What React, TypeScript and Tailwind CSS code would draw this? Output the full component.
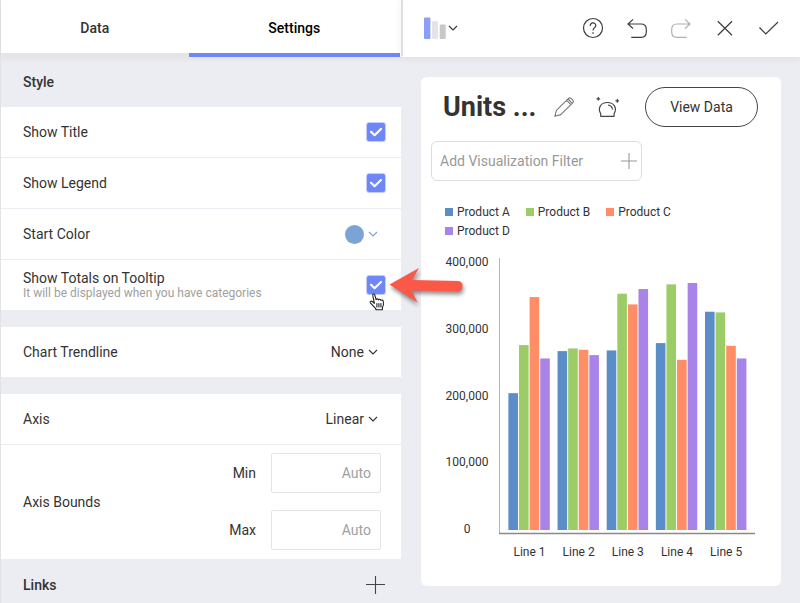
import type { ReactNode } from "react";

const PRODUCTS = [
  { name: "Product A", color: "#5b8ec9" },
  { name: "Product B", color: "#9bcc66" },
  { name: "Product C", color: "#ff8d66" },
  { name: "Product D", color: "#a984e8" },
];

// Units per line, in thousands, in the order of PRODUCTS.
const LINES = [
  { name: "Line 1", units: [205, 277, 349, 257] },
  { name: "Line 2", units: [268, 272, 270, 262] },
  { name: "Line 3", units: [269, 354, 338, 361] },
  { name: "Line 4", units: [280, 368, 255, 370] },
  { name: "Line 5", units: [327, 326, 276, 257] },
];

const TICKS = [400, 300, 200, 100, 0];

function Chevron({ className = "" }: { className?: string }) {
  return (
    <svg viewBox="0 0 10 10" className={`h-[10px] w-[10px] shrink-0 ${className}`} fill="none" stroke="currentColor" strokeWidth="1.1" aria-hidden="true">
      <path d="M1 3 L5 7 L9 3" />
    </svg>
  );
}

function Row({ children, last = false }: { children: ReactNode; last?: boolean }) {
  return (
    <div className={`relative flex items-center justify-between bg-white pl-[22px] pr-[15px] ${last ? "h-[50px]" : "h-[51px] border-b border-[#ecedf2]"}`}>
      {children}
    </div>
  );
}

function CheckRow({ id, label, note, last, children }: { id: string; label: string; note?: string; last?: boolean; children?: ReactNode }) {
  return (
    <Row last={last}>
      <label htmlFor={id} className="flex flex-col">
        <span className={note ? "leading-4" : "leading-5"}>{label}</span>
        {note && <span className="text-xs leading-[14px] text-[#a0a0a0]">{note}</span>}
      </label>
      <span className="grid h-5 w-5 shrink-0">
        <input id={id} type="checkbox" defaultChecked className="peer col-start-1 row-start-1 h-5 w-5 appearance-none rounded-[3px] border border-[#c3ccfc] bg-white checked:bg-[#6e87f8]" />
        <svg viewBox="0 0 20 20" className="pointer-events-none col-start-1 row-start-1 h-5 w-5 opacity-0 peer-checked:opacity-100" fill="none" stroke="#fff" strokeWidth="2.2" strokeLinecap="round" strokeLinejoin="round" aria-hidden="true">
          <path d="M5 9.800 L8.600 13.200 L15 7" />
        </svg>
      </span>
      {children}
    </Row>
  );
}

function SelectRow({ id, label, options, last }: { id: string; label: string; options: string[]; last?: boolean }) {
  return (
    <Row last={last}>
      <label htmlFor={id}>{label}</label>
      <span className="flex items-center gap-1 pr-2">
        <select id={id} className="w-24 appearance-none bg-transparent [text-align-last:right]">
          {options.map((o) => (
            <option key={o}>{o}</option>
          ))}
        </select>
        <Chevron />
      </span>
    </Row>
  );
}

function BoundField({ id, label }: { id: string; label: string }) {
  return (
    <div className="flex items-center justify-end gap-[15px]">
      <label htmlFor={id}>{label}</label>
      <input id={id} type="text" placeholder="Auto" className="h-10 w-[110px] rounded-xs border border-[#e4e4e6] bg-white px-[9px] text-right placeholder:text-[#a0a0a0]" />
    </div>
  );
}

function Pointer() {
  return (
    <>
      <svg viewBox="0 0 80 44" className="pointer-events-none absolute left-[387px] top-[3px] z-10 h-11 w-20 drop-shadow-[1px_3px_2px_rgba(0,0,0,0.45)]" aria-hidden="true">
        <path d="M1.500 21.500 L31 5 L24 17 L70 18 Q75 18.500 74.500 23.500 Q74 28.500 69.500 28.500 L23.500 27.500 L29.500 39.500 Z" fill="#fb5848" />
      </svg>
      <svg viewBox="0 0 16 18" className="pointer-events-none absolute left-[368px] top-[33px] z-10 h-[18px] w-4" fill="#fff" stroke="#222" strokeWidth="1.1" strokeLinejoin="round" strokeLinecap="round" aria-hidden="true">
        <path d="M5.400 10.300 L3.800 2.700 C3.400 .8 5.400 .4 5.900 2.200 L7.100 6.700 C7.500 5.500 9.300 5.600 9.500 6.900 C10.100 5.900 11.700 6.200 11.900 7.400 C12.700 6.700 14.200 7 14.300 8.400 C14.700 10.800 14.600 12.400 13.500 14.200 L13.300 16.700 H7 L6.500 15.300 C5 13.800 3.500 12.100 1.400 9.800 C.5 8.500 2 7.700 3.200 8.500 Z" />
        <path d="M7.900 10.500 V14 M9.900 10.500 V14 M11.900 10.500 V14" />
      </svg>
    </>
  );
}

function SettingsPanel() {
  return (
    <aside className="w-[401px] shrink-0 border-l border-[#e3e3e5]">
      <div role="tablist" className="grid h-[57px] grid-cols-[47%_53%] bg-white pr-px font-medium shadow-[0_2px_6px_rgba(0,0,0,0.05)]">
        <button role="tab" aria-selected="false" className="border-b-4 border-[#e5e5e7] bg-white pt-[2px]">
          Data
        </button>
        <button role="tab" aria-selected="true" className="border-b-4 border-[#6e87f8] bg-white pt-[2px] text-black">
          Settings
        </button>
      </div>

      <h2 className="flex h-[50px] items-center pl-[22px] font-medium">Style</h2>
      <section>
        <CheckRow id="show-title" label="Show Title" />
        <CheckRow id="show-legend" label="Show Legend" />
        <Row>
          <span id="start-color">Start Color</span>
          <button aria-labelledby="start-color" className="flex items-center gap-1 pr-2 text-[#7ba3d4]">
            <span className="h-[19px] w-[19px] rounded-full bg-[#7ba3d4]" />
            <Chevron />
          </button>
        </Row>
        <CheckRow id="show-totals" label="Show Totals on Tooltip" note="It will be displayed when you have categories" last>
          <Pointer />
        </CheckRow>
      </section>

      <section className="mt-[17px]">
        <SelectRow id="trendline" label="Chart Trendline" options={["None", "Linear Fit"]} last />
      </section>

      <section className="mt-[17px]">
        <SelectRow id="axis" label="Axis" options={["Linear", "Logarithmic"]} />
        <fieldset className="flex items-center justify-between bg-white pb-[9px] pl-[22px] pr-5 pt-2">
          <span>Axis Bounds</span>
          <div className="flex flex-col gap-[17px]">
            <BoundField id="min" label="Min" />
            <BoundField id="max" label="Max" />
          </div>
        </fieldset>
      </section>

      <div className="flex h-[52px] items-center justify-between pl-[22px] pr-4">
        <h2 className="font-medium">Links</h2>
        <button aria-label="Add link">
          <svg viewBox="0 0 20 20" className="h-5 w-5" stroke="#444" strokeWidth="1.1" aria-hidden="true">
            <path d="M10.500 1 V19 M1 9.500 H20" />
          </svg>
        </button>
      </div>
    </aside>
  );
}

function ToolButton({ label, disabled, children }: { label: string; disabled?: boolean; children: ReactNode }) {
  return (
    <button aria-label={label} disabled={disabled} className="h-6 w-6 text-[#3c3c3c] disabled:text-[#b0b0b0]">
      <svg viewBox="0 0 24 24" className="h-6 w-6" fill="none" stroke="currentColor" strokeWidth="1.2" aria-hidden="true">
        {children}
      </svg>
    </button>
  );
}

function Toolbar() {
  return (
    <header className="flex h-[57px] items-center justify-between border-b border-l-2 border-b-white border-l-[#dfdfe1] bg-white pl-[21px] pr-[19px] shadow-[0_2px_8px_rgba(0,0,0,0.06)]">
      <button aria-label="Chart type" className="flex items-center gap-[2px]">
        <svg viewBox="0 0 22 22" className="h-[22px] w-[22px]" aria-hidden="true">
          <rect x="0" y="0.500" width="6.400" height="21.500" rx="1" fill="#8b9ffa" />
          <rect x="8" y="4" width="6" height="18" rx="1" fill="#e4e4e4" />
          <rect x="15.700" y="7.500" width="6" height="14.500" rx="1" fill="#c8c8c8" />
        </svg>
        <Chevron />
      </button>
      <div className="flex gap-5">
        <ToolButton label="Help">
          <circle cx="12" cy="12" r="9.500" />
          <path d="M9.200 10 C9 6 14.900 6 14.800 9.700 C14.700 11.700 12.100 11.700 12 14.600" />
          <circle cx="12" cy="17" r="0.500" fill="currentColor" strokeWidth="0.600" />
        </ToolButton>
        <ToolButton label="Undo">
          <path d="M3.200 8 H16 Q21.300 8 21.300 13.300 V16 Q21.300 21.300 16 21.300 H6.300 M8 3.400 L3 8 L8 12.500" />
        </ToolButton>
        <ToolButton label="Redo" disabled>
          <path d="M20.800 8 H8 Q2.700 8 2.700 13.300 V16 Q2.700 21.300 8 21.300 H17.700 M16 3.400 L21 8 L16 12.500" />
        </ToolButton>
        <ToolButton label="Close">
          <path d="M4.800 5.300 L19 19.300 M19 5.300 L4.800 19.300" />
        </ToolButton>
        <ToolButton label="Done">
          <path d="M2.500 11.500 L8.800 18 L21 6" />
        </ToolButton>
      </div>
    </header>
  );
}

function UnitsChart() {
  const base = 280;
  return (
    <svg viewBox="0 0 340 320" className="block w-full text-xs" fill="#333" role="img" aria-label="Units by line and product">
      {TICKS.map((t) => (
        <text key={t} x="36" y={16 + (400 - t) * 0.6675} textAnchor="middle">
          {(t * 1000).toLocaleString("en-US")}
        </text>
      ))}
      <path d="M68.500 8 V284" stroke="#b5b5b5" fill="none" />
      <path d="M68 283.500 H324" stroke="#8a8a8a" strokeWidth="1.300" fill="none" />
      {LINES.map((line, i) => (
        <g key={line.name}>
          {line.units.map((u, j) => (
            <rect key={j} x={77.4 + i * 49.15 + j * 10.6} y={base - u * 0.6675} width="9.600" height={u * 0.6675} fill={PRODUCTS[j].color} />
          ))}
          <text x={98.5 + i * 49.15} y="306" textAnchor="middle">
            {line.name}
          </text>
        </g>
      ))}
    </svg>
  );
}

function ChartCard() {
  return (
    <article className="ml-5 mr-[19px] mt-5 rounded-md bg-white px-[10px] pb-4 pt-[10px]">
      <div className="flex h-10 items-center pl-3 pr-[13px]">
        <h1 className="min-w-0 flex-1 whitespace-nowrap text-[27px] font-bold leading-8">Units ...</h1>
        <button aria-label="Edit title" className="mr-[22px]">
          <svg viewBox="0 0 20 20" className="h-5 w-5" fill="none" stroke="#777" strokeWidth="1.100" strokeLinejoin="round" aria-hidden="true">
            <path d="M.8 19.300 L2.400 13.300 L14.300 1.600 Q15.800 .2 17.300 1.600 L18.700 3 Q20 4.500 18.700 5.900 L6.700 17.600 Z M12.600 3.300 L16.900 7.600 M14 2 L18.200 6.300" />
          </svg>
        </button>
        <button aria-label="Insights" className="mr-[25px]">
          <svg viewBox="0 0 24 22" className="h-[22px] w-6" fill="none" stroke="#444" strokeWidth="1.200" strokeLinejoin="round" aria-hidden="true">
            <path d="M4.700 20.300 V17.500 C1.500 12.500 4.500 6.500 11.400 6.500 C18.300 6.500 21.300 12.500 18.100 17.500 V20.300 Z M12 9 Q16 9.500 16.600 13.500" />
            <path d="M2.300 1 V4.600 M.5 2.800 H4.100 M21.300 3.100 V6.700 M19.500 4.900 H23.100" />
          </svg>
        </button>
        <button className="h-10 w-[113px] shrink-0 rounded-full border border-[#444]">View Data</button>
      </div>

      <button className="mt-[14px] flex h-10 w-[211px] items-center justify-between rounded-md border border-[#dedede] pl-2 pr-1 text-[#999]">
        Add Visualization Filter
        <svg viewBox="0 0 16 16" className="h-4 w-4" stroke="#999" strokeWidth="1.100" aria-hidden="true">
          <path d="M8 0 V16 M0 8 H16" />
        </svg>
      </button>

      <ul className="ml-[14px] mt-[23px] flex max-w-[290px] flex-wrap gap-x-4 gap-y-[3px] text-xs">
        {PRODUCTS.map((p) => (
          <li key={p.name} className="flex items-center gap-1">
            <span className="h-2 w-2" style={{ backgroundColor: p.color }} />
            {p.name}
          </li>
        ))}
      </ul>

      <div className="mt-[11px]">
        <UnitsChart />
      </div>
    </article>
  );
}

export default function App() {
  return (
    <div className="flex h-screen overflow-hidden bg-[#ecedf3] font-[Roboto,sans-serif] text-sm text-[#333]">
      <SettingsPanel />
      <main className="min-w-0 flex-1">
        <Toolbar />
        <ChartCard />
      </main>
    </div>
  );
}
